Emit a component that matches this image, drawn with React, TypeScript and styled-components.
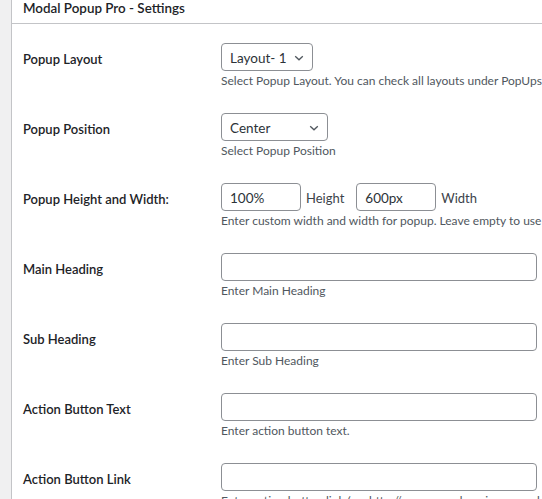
import React from "react";
import styled, { createGlobalStyle } from "styled-components";

const Global = createGlobalStyle`
  html, body {
    margin: 0;
    padding: 0;
    overflow: hidden;
    background: #f0f0f1;
  }
  body {
    font-family: Lato, "Noto Sans", sans-serif;
    color: #1d2327;
  }
`;

const Page = styled.div`
  display: flex;
  height: 499px;
  padding-left: 11px;
  box-sizing: border-box;
`;

const Panel = styled.section`
  flex: 1;
  min-width: 0;
  overflow: hidden;
  background: #fff;
  border-left: 1px solid #c3c4c7;
`;

const Header = styled.h2`
  margin: 0;
  height: 24px;
  box-sizing: border-box;
  padding: 0 11px;
  border-bottom: 1px solid #c3c4c7;
  font-size: 13.4px;
  font-weight: 600;
  line-height: 17px;
  white-space: nowrap;
`;

const Form = styled.div`
  display: flex;
  flex-direction: column;
`;

const Row = styled.div`
  display: grid;
  grid-template-columns: 198px 1fr;
  height: 70px;
  padding: 19px 0 0 11px;
  box-sizing: border-box;
`;

const Label = styled.label`
  padding-top: 2px;
  font-size: 13px;
  font-weight: 600;
  line-height: 28px;
  white-space: nowrap;
`;

const Field = styled.div`
  display: flex;
  flex-direction: column;
  align-items: flex-start;
  min-width: 0;
`;

const Inline = styled.div`
  display: flex;
  align-items: center;
  gap: 5px;
`;

const Unit = styled.span`
  padding-top: 2px;
  font-size: 13px;
  color: #3c434a;
  margin-right: 7px;
`;

const Description = styled.p`
  margin: 1px 0 0;
  font-size: 12px;
  line-height: 17px;
  color: #50575e;
  white-space: nowrap;
`;

const TextInput = styled.input<{ $w?: number }>`
  width: ${(p) => (p.$w ? `${p.$w}px` : "316px")};
  height: 28px;
  box-sizing: border-box;
  padding: 2px 8px 0;
  border: 1px solid #8c8f94;
  border-radius: 4px;
  font-family: inherit;
  font-size: 13.5px;
  color: #2c3338;
  background: #fff;
  outline: none;
`;

const SelectWrap = styled.div`
  position: relative;
  display: inline-flex;
`;

const Select = styled.select<{ $w: number }>`
  appearance: none;
  width: ${(p) => p.$w}px;
  height: 28px;
  box-sizing: border-box;
  padding: 2px 24px 0 8px;
  border: 1px solid #8c8f94;
  border-radius: 4px;
  font-family: inherit;
  font-size: 13.5px;
  color: #2c3338;
  background: #fff;
  outline: none;
`;

const Chevron = styled.svg`
  position: absolute;
  right: 9px;
  top: 12px;
  pointer-events: none;
`;

const Arrow = () => (
  <Chevron width="10" height="6" viewBox="0 0 10 6">
    <path d="M1.2 1.2l3.8 3.6 3.8-3.6" fill="none" stroke="#50575e" strokeWidth="1.3" />
  </Chevron>
);

const Dropdown = ({ w, value, options }: { w: number; value: string; options: string[] }) => (
  <SelectWrap>
    <Select $w={w} defaultValue={value}>
      {options.map((o) => (
        <option key={o}>{o}</option>
      ))}
    </Select>
    <Arrow />
  </SelectWrap>
);

export default function App() {
  return (
    <>
      <Global />
      <Page>
        <Panel>
          <Header>Modal Popup Pro - Settings</Header>
          <Form>
            <Row>
              <Label>Popup Layout</Label>
              <Field>
                <Dropdown w={92} value="Layout- 1" options={["Layout- 1", "Layout- 2", "Layout- 3"]} />
                <Description>
                  Select Popup Layout. You can check all layouts under PopUps Preview tab.
                </Description>
              </Field>
            </Row>
            <Row>
              <Label>Popup Position</Label>
              <Field>
                <Dropdown w={107} value="Center" options={["Center", "Top", "Bottom"]} />
                <Description>Select Popup Position</Description>
              </Field>
            </Row>
            <Row>
              <Label>Popup Height and Width:</Label>
              <Field>
                <Inline>
                  <TextInput $w={80} defaultValue="100%" />
                  <Unit>Height</Unit>
                  <TextInput $w={80} defaultValue="600px" />
                  <Unit>Width</Unit>
                </Inline>
                <Description>
                  Enter custom width and width for popup. Leave empty to use default.
                </Description>
              </Field>
            </Row>
            <Row>
              <Label>Main Heading</Label>
              <Field>
                <TextInput />
                <Description>Enter Main Heading</Description>
              </Field>
            </Row>
            <Row>
              <Label>Sub Heading</Label>
              <Field>
                <TextInput />
                <Description>Enter Sub Heading</Description>
              </Field>
            </Row>
            <Row>
              <Label>Action Button Text</Label>
              <Field>
                <TextInput />
                <Description>Enter action button text.</Description>
              </Field>
            </Row>
            <Row>
              <Label>Action Button Link</Label>
              <Field>
                <TextInput />
                <Description>
                  Enter action button link (eg: http://www.yourdomain.com or https://www.yourdomain.com)
                </Description>
              </Field>
            </Row>
          </Form>
        </Panel>
      </Page>
    </>
  );
}
